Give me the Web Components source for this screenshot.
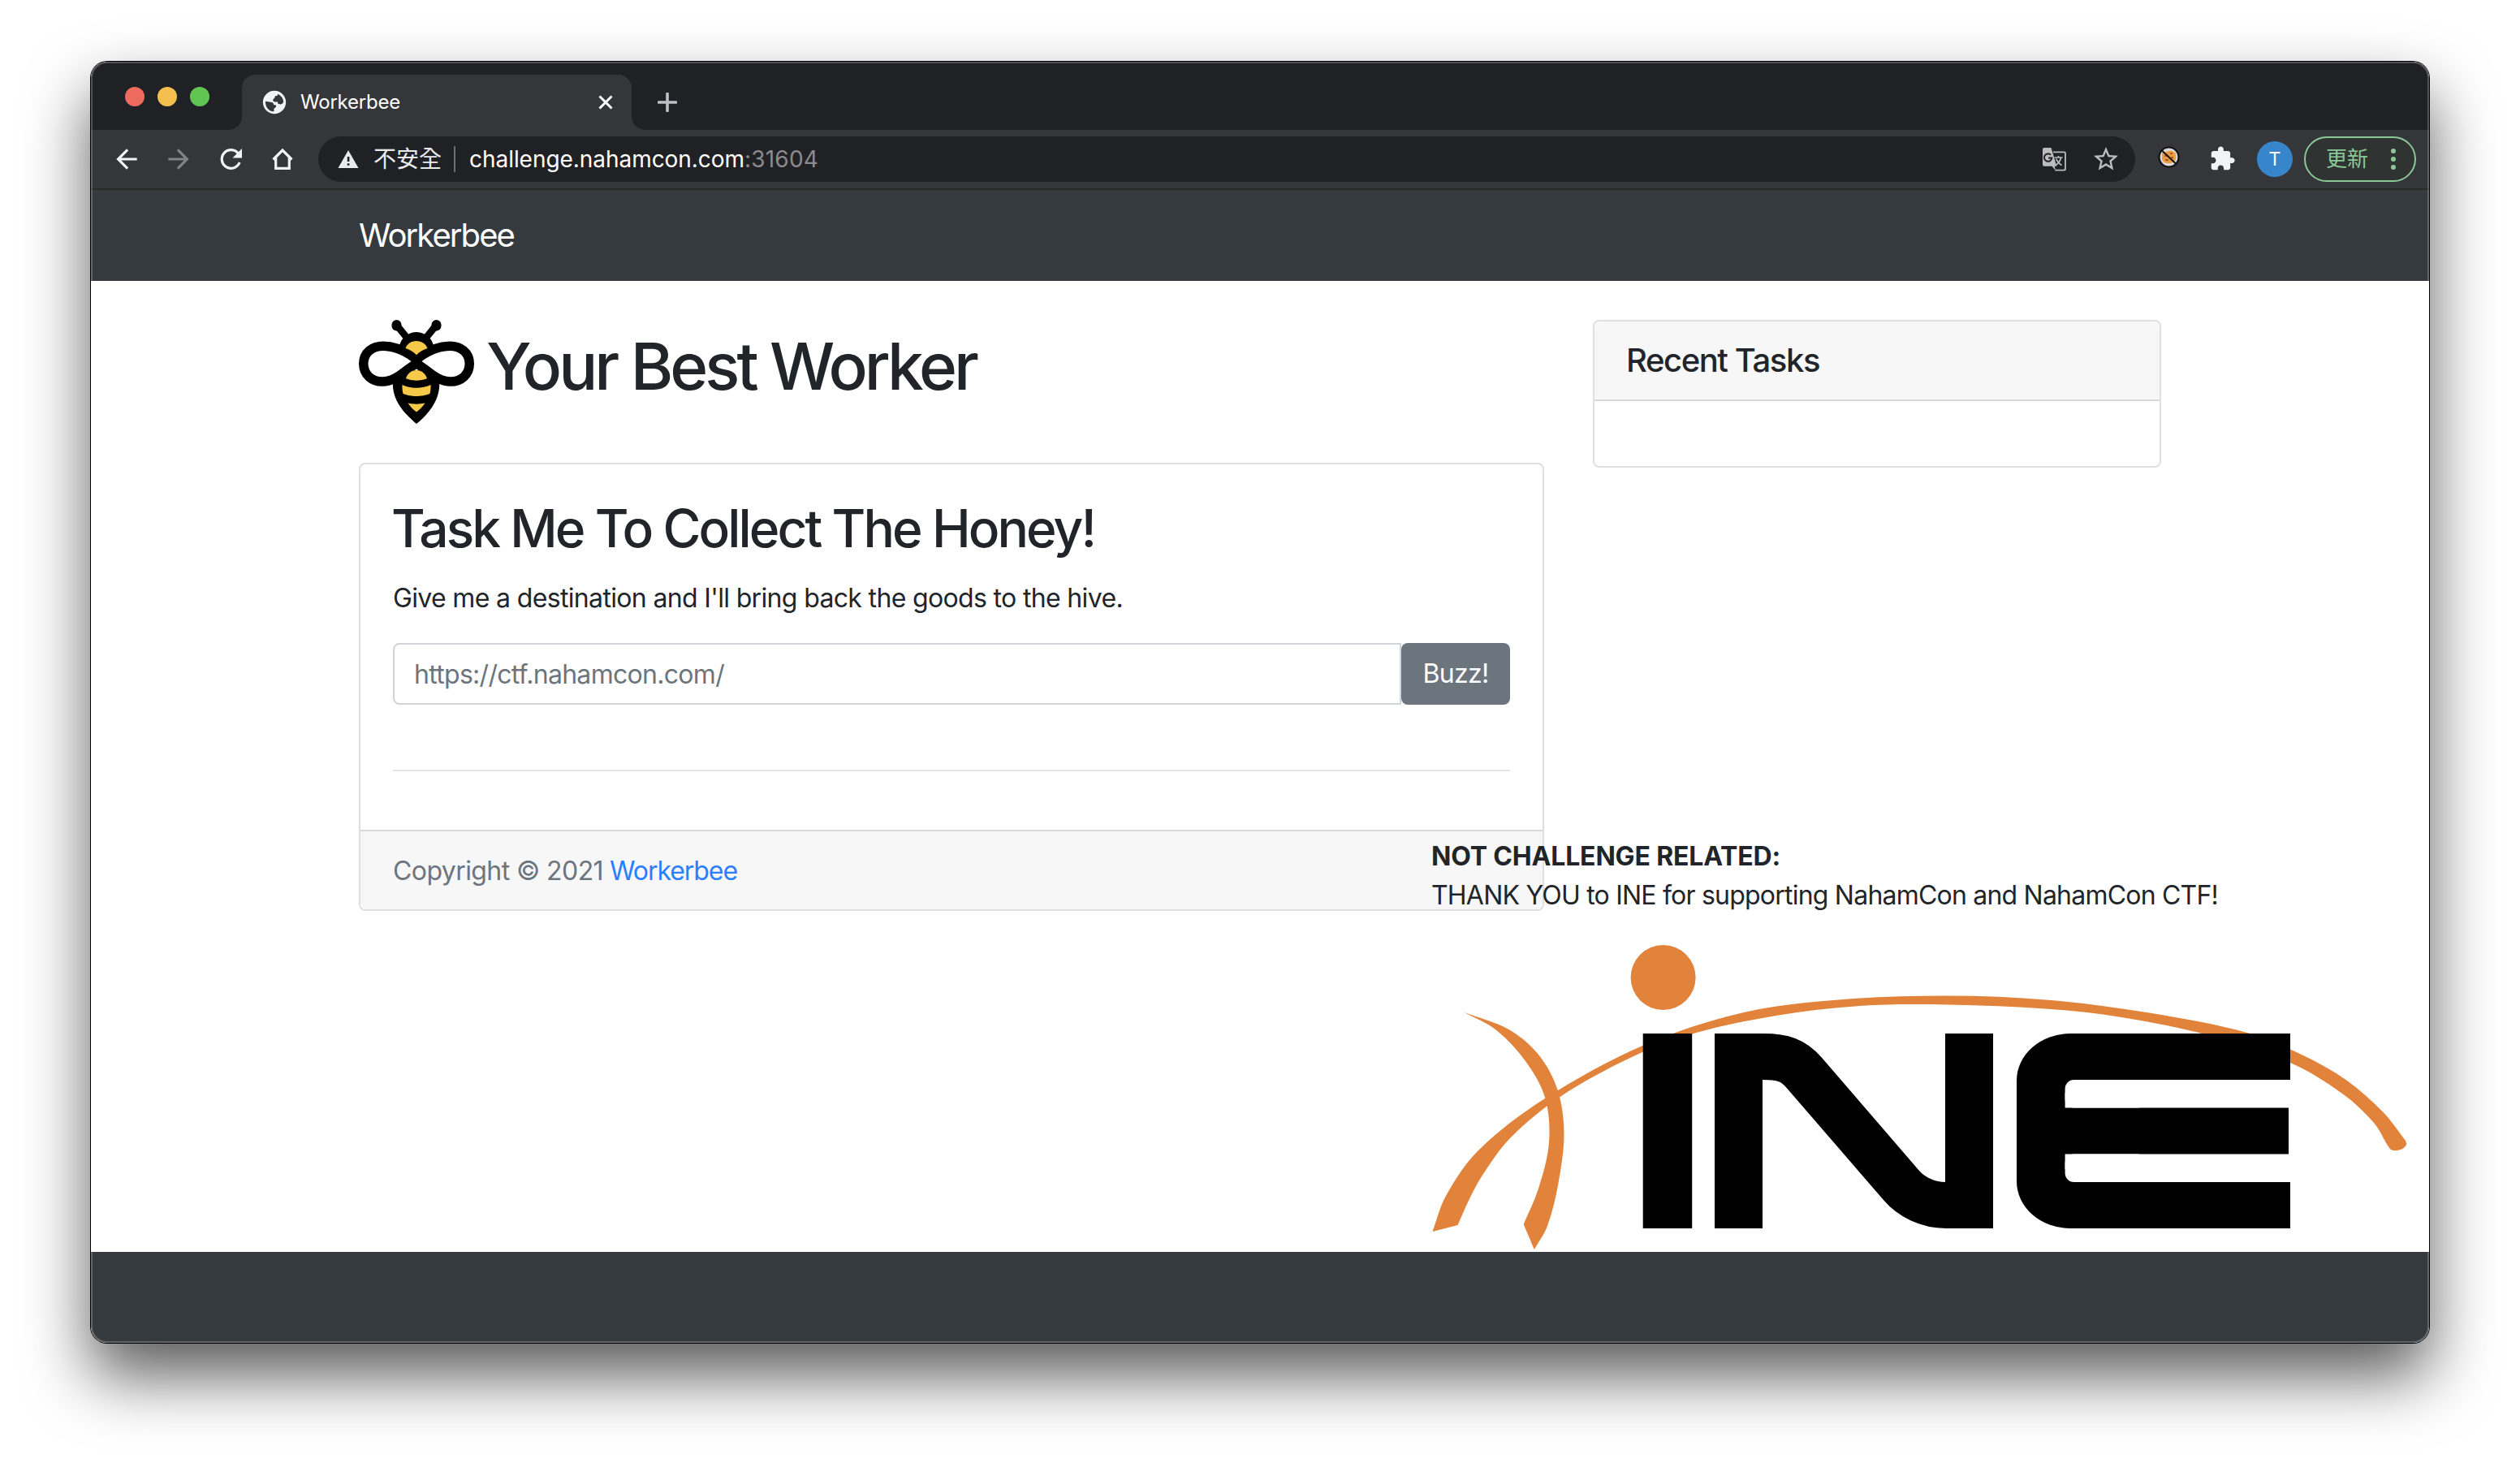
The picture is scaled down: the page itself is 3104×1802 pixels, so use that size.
<!DOCTYPE html>
<html lang="en">
<head>
<meta charset="utf-8">
<title>Workerbee</title>
<style>
  html, body { margin: 0; height: 100%; }
  body { background: #fff; overflow: hidden; display: flex; box-sizing: border-box; padding: 76px 112px 148px;
    font-family: Inter, "Noto Sans CJK TC", sans-serif; font-size: 32px; line-height: 48px; color: #212529; }
</style>
</head>
<body>
<browser-window>
  <tab-strip slot="tabs" label="Workerbee"></tab-strip>
  <tool-bar slot="toolbar"></tool-bar>
  <worker-page></worker-page>
</browser-window>

<script>
const define = (name, html, setup) => {
  const t = document.createElement('template');
  t.innerHTML = html;
  customElements.define(name, class extends HTMLElement {
    constructor() {
      super();
      this.attachShadow({ mode: 'open' }).appendChild(t.content.cloneNode(true));
    }
    connectedCallback() { if (setup) setup.call(this, this.shadowRoot); }
  });
};

/* A single line of text tracked so that it spans a given width. */
define('fit-text', `<style>:host{display:inline-block;white-space:nowrap}span{display:inline-block}</style><span><slot></slot></span>`,
function (root) {
  const s = root.querySelector('span');
  const want = parseFloat(this.getAttribute('w'));
  const n = this.textContent.length;
  const have = s.getBoundingClientRect().width;
  if (have) s.style.letterSpacing = ((want - have) / n).toFixed(3) + 'px';
});

define('browser-window', `<style>
  :host{display:flex;flex-direction:column;flex:1;position:relative;border-radius:20px;
    box-shadow:0 0 0 1px #000,0 40px 80px rgba(0,0,0,.65)}
  .clip{display:flex;flex-direction:column;flex:1;border-radius:20px;overflow:hidden;background:#fff}
  .rim{position:absolute;inset:0;border-radius:20px;box-shadow:inset 0 0 0 2px rgba(255,255,255,.22);pointer-events:none}
</style>
<div class="clip"><slot name="tabs"></slot><slot name="toolbar"></slot><slot></slot></div><div class="rim"></div>`);

define('tab-strip', `<style>
  :host{display:flex;height:84px;background:#202124;align-items:flex-end;padding-left:42px;box-sizing:border-box}
  .lights{display:flex;gap:16px;height:24px;align-self:flex-start;margin-top:31px}
  .lights i{width:24px;height:24px;border-radius:50%}
  .tab{margin-left:40px;margin-top:16px;width:480px;height:68px;background:#35363a;border-radius:16px 16px 0 0;
    box-sizing:border-box;padding:0 23px 0 23px;display:flex;align-items:center;position:relative}
  .tab::before,.tab::after{content:"";position:absolute;bottom:0;width:16px;height:16px}
  .tab::before{left:-16px;background:radial-gradient(circle at 0 0,transparent 15.5px,#35363a 16px)}
  .tab::after{right:-16px;background:radial-gradient(circle at 100% 0,transparent 15.5px,#35363a 16px)}
  .label{color:#fff;font-size:24px;line-height:36px;margin-left:18px;flex:1}
  svg{display:block}
  .plus{margin:0 0 22px 32px}
</style>
<div class="lights"><i style="background:#ed6a5e"></i><i style="background:#f5bf4f"></i><i style="background:#61c554"></i></div>
<div class="tab">
  <svg width="34" height="34" viewBox="0 0 24 24" style="margin-left:0;margin-right:-3px"><path fill="#f1f3f4" d="M12 2C6.48 2 2 6.48 2 12s4.480 10 10 10 10-4.480 10-10S17.520 2 12 2z"/><path fill="#35363a" d="M4.200 11.200 9.600 12c1.200.2 1.800 1 1.700 2.100l1.700.3c.7.2.7 1 .3 1.600l-1.700 1.700v2.200C7.300 20.300 4 16.500 4.200 11.200zM14.800 4.700c2.800 1.200 4.800 3.700 5.100 6.800-.4 1.200-1.200 2.100-2.300 2.300l-2-.4c-.8-.3-.8-1-.8-1.900-1.400.4-3.300.3-3.900-.7-.4-1 .2-2 1.200-2.500l.6-1.800 2-.4z"/></svg>
  <span class="label"><fit-text w="123">Workerbee</fit-text></span>
  <svg width="18" height="18" viewBox="0 0 18 18"><path d="M1.500 1.500l15 15M16.500 1.500l-15 15" stroke="#fff" stroke-width="3"/></svg>
</div>
<svg class="plus" width="24" height="24" viewBox="0 0 24 24"><path d="M12 1.500v21M1.500 12h21" stroke="#bdc1c6" stroke-width="3.600" stroke-linecap="round"/></svg>`);

define('tool-bar', `<style>
  :host{display:flex;height:74px;box-sizing:border-box;background:#35363a;border-bottom:2px solid #292a28;
    align-items:center;padding:0 16px 0 25px}
  svg{display:block;flex:none}
  .nav{display:flex;gap:26px}
  .box{display:flex;align-items:center;flex:none;width:2238px;height:56px;border-radius:28px;background:#202124;
    margin-left:25px;box-sizing:border-box;padding:0 18px 0 24px;font-size:28px;line-height:40px;color:#fff}
  .warn{margin-left:18px;color:#e8eaed;line-height:40px}
  .sep{width:2px;height:32px;background:#6f7073;margin:0 17px 0 15px}
  .port{color:#8a8b8e}
  .gap{flex:1}
  .ext{margin-left:27px}
  .me{width:44px;height:44px;border-radius:50%;background:#3786cb;color:#fff;font-size:23px;line-height:44px;text-align:center;margin-left:26px}
  .update{margin-left:14px;width:138px;height:56px;box-sizing:border-box;border:2px solid #8ac997;border-radius:28px;
    background:#2f3331;color:#8ac997;display:flex;align-items:center;padding:0 23px 0 25px;font-size:26px;line-height:40px;justify-content:space-between}
</style>
<div class="nav">
  <svg width="38" height="38" viewBox="0 0 24 24"><path fill="#f1f3f4" d="M20 11H7.830l5.590-5.590L12 4l-8 8 8 8 1.410-1.410L7.830 13H20z"/></svg>
  <svg width="38" height="38" viewBox="0 0 24 24"><path fill="#828386" d="M4 11h12.170l-5.590-5.590L12 4l8 8-8 8-1.410-1.410L16.170 13H4z"/></svg>
  <svg width="38" height="38" viewBox="0 0 38 38"><path fill="none" stroke="#f1f3f4" stroke-width="3.200" d="M28.600 12.200A11.300 11.300 0 1 0 30.100 23"/><path fill="#f1f3f4" d="M33 6v11.500H21.500z"/></svg>
  <svg width="38" height="38" viewBox="0 0 38 38"><path fill="none" stroke="#f1f3f4" stroke-width="3.200" stroke-linejoin="miter" d="M7.500 19.500 19 8l11.500 11.500M10.700 17v13.400h16.600V17"/></svg>
</div>
<div class="box">
  <svg width="26" height="24" viewBox="0 0 26 24"><path fill="#e8eaed" d="M13 1 25.500 23H.5z"/><path fill="#202124" d="M11.800 9h2.600v6h-2.600zM11.800 17.200h2.600v2.600h-2.600z"/></svg>
  <span class="warn">不安全</span><span class="sep"></span><fit-text w="339">challenge.nahamcon.com</fit-text><fit-text class="port" w="91">:31604</fit-text>
  <span class="gap"></span>
  <svg width="30" height="30" viewBox="0 0 30 30">
    <path fill="none" stroke="#bcbcbc" stroke-width="1.800" d="M14 6.400h13.400a1.600 1.600 0 0 1 1.600 1.600v19a1.600 1.600 0 0 1-1.600 1.600H16.500"/>
    <path fill="#bcbcbc" d="M3 1h8.500l6.800 22.800h-2.500L17 29l-4.500-5.200H3a2 2 0 0 1-2-2V3a2 2 0 0 1 2-2z"/>
    <path fill="none" stroke="#202124" stroke-width="2" d="M11 9.800A4.700 4.700 0 1 0 12.300 13.600H8"/>
    <path fill="none" stroke="#bcbcbc" stroke-width="1.700" d="M15.500 13h10M20.500 11v2M23.700 13c-1 4-3.700 7.500-6.200 9.200M17.500 14.500c1.300 3.200 4 6.200 7 8"/>
  </svg>
  <svg width="36" height="36" viewBox="0 0 24 24" style="margin-left:31px"><path fill="#bcbcbc" d="M22 9.240l-7.190-.62L12 2 9.190 8.630 2 9.240l5.460 4.730L5.820 21 12 17.270 18.180 21l-1.630-7.030L22 9.240zM12 15.400l-3.760 2.270 1-4.280-3.320-2.880 4.380-.38L12 6.100l1.710 4.040 4.380.38-3.320 2.880 1 4.280L12 15.400z"/></svg>
</div>
<svg class="ext" width="29" height="29" viewBox="0 0 29 29" style="margin-top:-5px">
  <circle cx="14.500" cy="14.500" r="12" fill="#d9d9dc" stroke="#14110f" stroke-width="2.200"/>
  <path fill="#ef9a3e" d="M6 9.500c3-2 6-1 8-2.500 3-1 7 .5 9 3-.5 2 .8 4 0 7-2 4-5 5.500-9 5-4 .3-7-1.500-8-5z"/>
  <path fill="#9a6330" d="M9 12h3v2H9zM16 9h3v2h-3zM17 14h3v2h-3zM10 17h4v2h-4z"/>
  <path d="M5.500 6 24 23.500" stroke="#14110f" stroke-width="1.900"/>
</svg>
<svg width="33" height="33" viewBox="0 0 24 24" style="margin-left:35px;margin-top:-1px"><path fill="#f1f3f4" d="M20.500 11H19V7c0-1.100-.9-2-2-2h-4V3.500C13 2.120 11.880 1 10.500 1S8 2.120 8 3.500V5H4c-1.100 0-1.990.9-1.990 2v3.800H3.500c1.490 0 2.700 1.210 2.700 2.700s-1.210 2.700-2.700 2.700H2V20c0 1.100.9 2 2 2h3.800v-1.500c0-1.490 1.210-2.700 2.700-2.700 1.490 0 2.700 1.210 2.700 2.700V22H17c1.100 0 2-.9 2-2v-4h1.500c1.380 0 2.500-1.120 2.500-2.500S21.880 11 20.500 11z"/></svg>
<div class="me">T</div>
<div class="update"><span>更新</span><svg width="6" height="28" viewBox="0 0 6 28" fill="#8ac997"><circle cx="3" cy="4" r="3"/><circle cx="3" cy="14" r="3"/><circle cx="3" cy="24" r="3"/></svg></div>`);

define('bee-logo', `<style>:host{display:block;width:142px;height:128px;flex:none}svg{display:block;overflow:visible}</style>
<svg width="142" height="128" viewBox="0 0 142 128">
  <g stroke="#000" stroke-linecap="round"><path stroke-width="8.500" d="M47 7 60 23M95 7 82 23"/><path stroke-width="12" d="M46.500 6v1.500M95.500 6v1.500"/></g>
  <circle cx="71" cy="36.500" r="21.500"/>
  <g stroke="#000" stroke-width="23" stroke-linejoin="round">
    <path d="M64.500 51C51 41 39 38 30 38 19 38 11.500 44 11.500 54s7.500 16.300 17.500 16.300C42 70.300 51 60 64.500 51z"/>
    <path d="M77.500 51C91 41 103 38 112 38c11 0 18.500 6 18.500 16S123 70.300 113 70.300C100 70.300 91 60 77.500 51z"/>
  </g>
  <path d="M48 62h46l5.300 16C99.500 98 88 114 71 128 54 114 41.500 98 41.800 78z"/>
  <g fill="#fff">
    <path d="M64.500 51C51 41 39 38 30 38 19 38 11.500 44 11.500 54s7.500 16.300 17.500 16.300C42 70.300 51 60 64.500 51z"/>
    <path d="M77.500 51C91 41 103 38 112 38c11 0 18.500 6 18.500 16S123 70.300 113 70.300C100 70.300 91 60 77.500 51z"/>
  </g>
  <g fill="#f7c948">
    <path d="M57.500 35c2-5.500 7-9 13.500-9s11.500 3.500 13.500 9c-5 1.500-10 4.500-13.500 8.300C67.500 39.500 62.500 36.500 57.500 35z"/>
    <path d="M58 72.300C60 66 65 62 71 62s11 4 13 10.300c-8 3.200-18 3.200-26 0z"/>
    <path d="M53.500 80c11 5 24 5 35 0 .3 4-.2 7.500-1 11-10 4-23 4-33 0-.8-3.500-1.300-7-1-11z"/>
    <path d="M60.500 102.500c7 1.500 14 1.500 21 0-2.700 4.300-6.300 8-10.500 11-4.200-3-7.800-6.700-10.500-11z"/>
  </g>
</svg>`);

/* Sponsor mark: orange figure and swoosh traced through edge points, wordmark built from bars. */
define('sponsor-logo', `<style>:host{display:block}svg{display:block}</style>
<svg width="1204" height="380" viewBox="1764 1160 1204 380" role="img" aria-label="INE">
  <g id="orange" fill="#e2833b"><circle cx="2048.600" cy="1204" r="40"/></g>
  <rect x="2023.700" y="1273" width="60.500" height="240"/>
  <rect x="2112" y="1273" width="59" height="240"/>
  <rect x="2396" y="1273" width="59" height="240"/>
  <path fill="none" stroke="#000" stroke-width="57" d="M2150 1301.500H2172C2196 1301.500 2209 1306 2222 1321L2342 1460C2354 1474 2374 1484.500 2397 1484.500H2420"/>
  <rect x="2484" y="1273" width="160" height="240" rx="66" ry="58"/>
  <rect x="2560" y="1273" width="261" height="240"/>
  <rect x="2543.600" y="1330" width="100" height="34.500" rx="11" fill="#fff"/>
  <rect x="2543.600" y="1421.500" width="100" height="34.500" rx="11" fill="#fff"/>
  <path fill="#fff" d="M2543.600 1346H2570V1330H2822V1364.500H2543.600zM2543.600 1421.500H2822V1456H2570V1440H2543.600z"/>
  <rect x="2819" y="1364" width="3" height="58" fill="#fff"/>
</svg>`, function (root) {
  /* Unit tangents scaled by chord length keep unevenly spaced points free of ripples. */
  const smooth = (p, first) => {
    const tan = p.map((_, i) => {
      const a = p[Math.max(i - 1, 0)], c = p[Math.min(i + 1, p.length - 1)];
      const l = Math.hypot(c[0] - a[0], c[1] - a[1]);
      return [(c[0] - a[0]) / l, (c[1] - a[1]) / l];
    });
    let d = (first ? 'M' : 'L') + p[0];
    for (let i = 0; i < p.length - 1; i++) {
      const b = p[i], c = p[i + 1], h = Math.hypot(c[0] - b[0], c[1] - b[1]) / 3;
      d += 'C' + [b[0] + tan[i][0] * h, b[1] + tan[i][1] * h, c[0] - tan[i + 1][0] * h, c[1] - tan[i + 1][1] * h, c[0], c[1]].map(v => v.toFixed(1)).join(' ');
    }
    return d;
  };
  const shapes = [
    [[[1764.5,1517],[1781,1473],[1821,1417],[1903,1353],[2023.7,1287.7],[2148,1247],[2270.6,1231],[2400,1226.5],[2523,1231.7],[2645.7,1247.3],[2768,1272],[2835,1299],[2890.6,1330.7],[2935.5,1370],[2963,1405]],
     [[2963,1405],[2964,1410],[2957,1416],[2946,1416.5],[2941,1411]],
     [[2941,1411],[2924,1383],[2886.5,1348],[2821,1309],[2711,1272.7],[2605,1251.7],[2523,1242.7],[2400,1237.5],[2290,1239],[2189,1250.7],[2087,1272.7],[2010,1302],[1921.6,1351],[1860,1402],[1825.7,1448],[1809.4,1478],[1795.5,1509]]],
    [[[1803,1246.7],[1858.4,1268],[1895,1299],[1918.4,1342],[1926.5,1395],[1919.6,1456.7],[1906,1510],[1889.8,1539]],
     [[1876.7,1508],[1895,1464],[1908,1406.7],[1903,1351.7],[1878.8,1306.7],[1842,1268],[1803,1246.7]]]
  ];
  const g = root.querySelector('#orange');
  for (const s of shapes) {
    const el = document.createElementNS('http://www.w3.org/2000/svg', 'path');
    el.setAttribute('d', s.map((p, i) => smooth(p, i === 0)).join('') + 'Z');
    g.appendChild(el);
  }
});

define('ui-card', `<style>
  :host{display:flex;flex-direction:column;background:#fff;border:2px solid #dfdfdf;border-radius:8px;box-sizing:border-box;overflow:hidden}
  .h,.f{display:none;background:#f7f7f7;padding:24px 40px;height:96px;box-sizing:border-box}
  :host([head]) .h{display:block;border-bottom:2px solid #d8d8d8;height:98px}
  :host([foot]) .f{display:block;border-top:2px solid #d8d8d8;height:98px;padding-top:25px}
  .b{flex:1;padding:40px}
</style><div class="h"><slot name="head"></slot></div><div class="b"><slot></slot></div><div class="f"><slot name="foot"></slot></div>`);

define('task-form', `<style>
  :host{display:flex;height:76px}
  .in{flex:1;box-sizing:border-box;border:2px solid #ced4da;border-radius:8px 0 0 8px;padding:13px 24px 11px;color:#6c757d}
  button{all:unset;box-sizing:border-box;width:134px;height:76px;padding-top:1px;background:#6c757d;color:#fff;border-radius:8px;text-align:center}
</style><div class="in"><fit-text w="382">https://ctf.nahamcon.com/</fit-text></div><button><fit-text w="81">Buzz!</fit-text></button>`);

define('worker-page', `<style>
  :host{display:flex;flex-direction:column;flex:1;position:relative}
  nav,footer{height:112px;background:#353a3e;flex:none}
  nav{box-sizing:border-box;padding:26px 330px;color:#fff;font-size:40px;line-height:60px}
  main{flex:1;display:flex;gap:60px;padding:48px 330px 0}
  .left{width:1460px}.right{width:700px}
  h1,h2,h5,p{margin:0;font-weight:500}
  h1{display:flex;gap:15px;height:128px;margin-bottom:48px;font-size:80px;line-height:96px}
  h1 fit-text{margin-top:8.500px}
  h2{font-size:64px;line-height:76.800px;padding-top:1px;margin-left:-2px}
  p{font-weight:400;margin:23.200px 0 31px}
  hr{border:0;height:2px;background:#e3e3e3;margin:80px 0 0}
  .main{height:552px}.recent{height:182px}
  h5{font-size:40px;line-height:48px;margin-left:-1px}
  .copy{color:#6c757d}a{color:#2a7fff}
  .sponsor{position:absolute;left:1651px;bottom:114px;display:flex;flex-direction:column}
  .sponsor b{font-weight:700}
  .sponsor sponsor-logo{margin:33px 0 0 1px}
</style>
<nav><fit-text w="191">Workerbee</fit-text></nav>
<main>
  <div class="left">
    <h1><bee-logo></bee-logo><fit-text w="603">Your Best Worker</fit-text></h1>
    <ui-card class="main" foot>
      <h2><fit-text w="866">Task Me To Collect The Honey!</fit-text></h2>
      <p><fit-text w="899">Give me a destination and I'll bring back the goods to the hive.</fit-text></p>
      <task-form></task-form>
      <hr>
      <div slot="foot" class="copy"><fit-text w="259">Copyright © 2021</fit-text><a style="margin-left:8px"><fit-text w="157">Workerbee</fit-text></a></div>
    </ui-card>
  </div>
  <div class="right"><ui-card class="recent" head><h5 slot="head"><fit-text w="238">Recent Tasks</fit-text></h5></ui-card></div>
</main>
<div class="sponsor">
  <b><fit-text w="430">NOT CHALLENGE RELATED:</fit-text></b>
  <span><fit-text w="969">THANK YOU to INE for supporting NahamCon and NahamCon CTF!</fit-text></span>
  <sponsor-logo></sponsor-logo>
</div>
<footer></footer>`);
</script>
</body>
</html>
